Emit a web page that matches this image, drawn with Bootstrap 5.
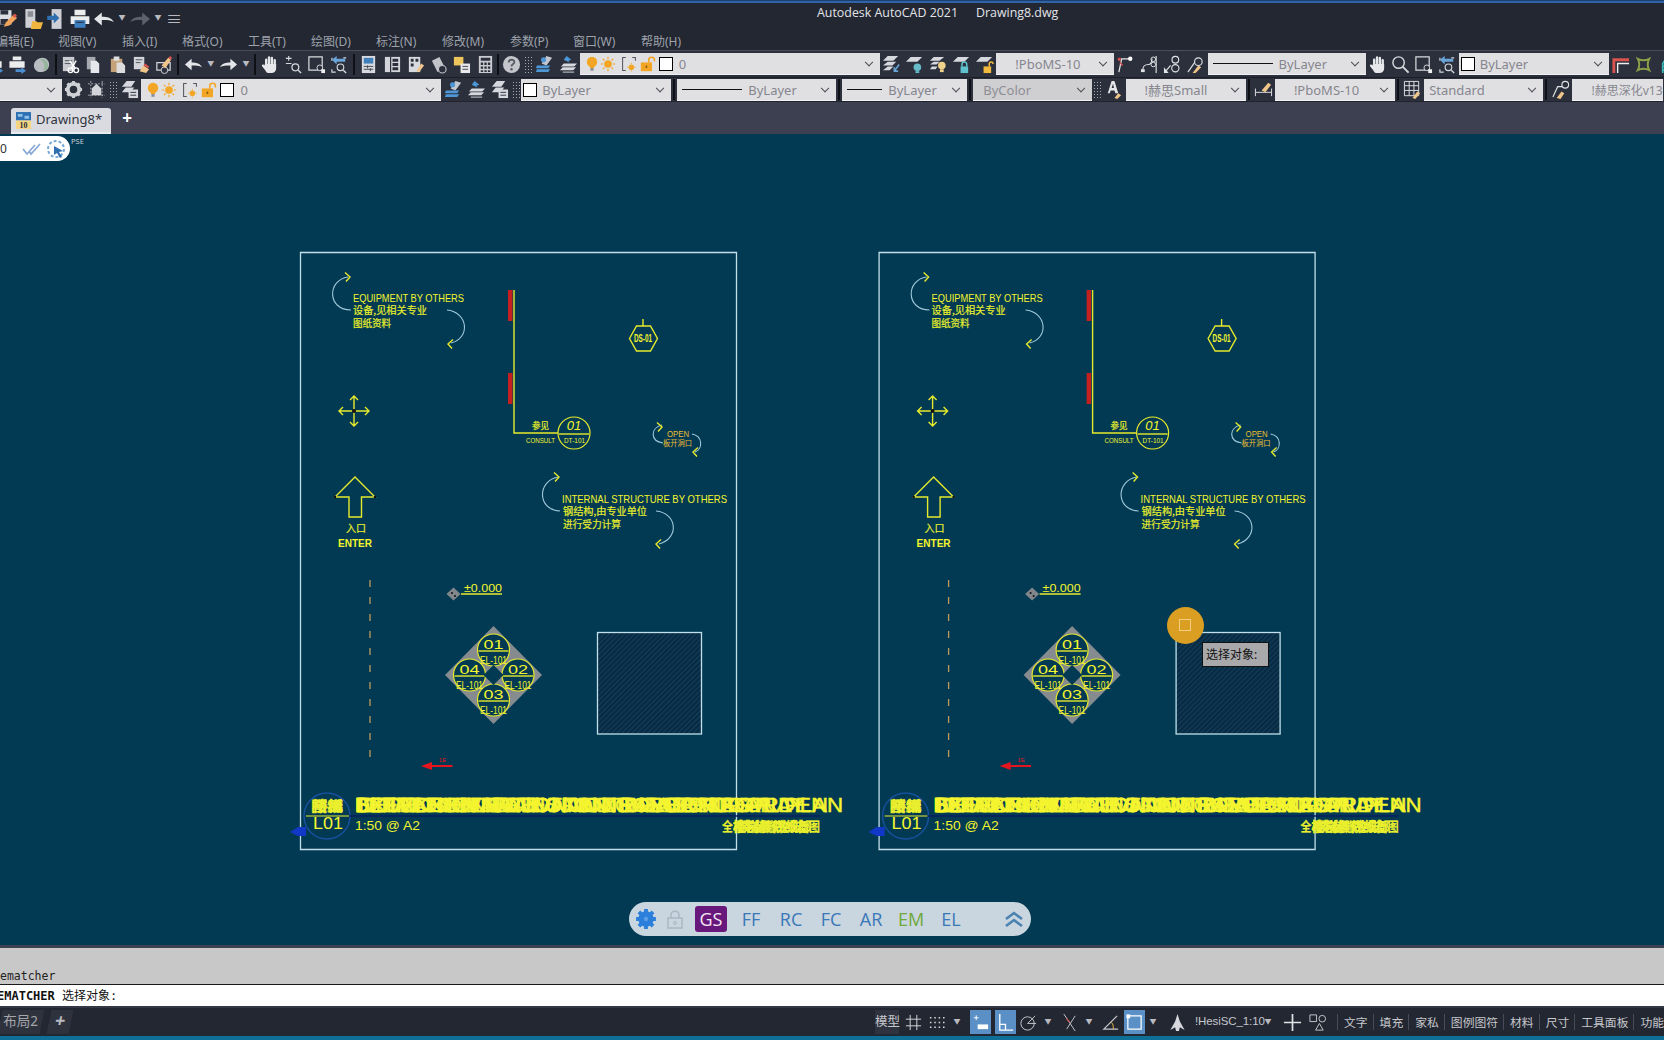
<!DOCTYPE html>
<html lang="zh-CN">
<head>
<meta charset="UTF-8">
<meta name="viewport" content="width=device-width, initial-scale=1.0">
<title>Autodesk AutoCAD 2021 - Drawing8.dwg</title>
<link href="https://cdn.jsdelivr.net/npm/bootstrap@5.3.0/dist/css/bootstrap.min.css" rel="stylesheet">
<style>
body { background:#23272f; overflow:hidden; font-family:"Noto Sans","Noto Sans CJK SC",sans-serif; font-size:12px; }
.app { height:1040px; width:1664px; overflow:hidden; }
.topline { height:3px; background:#2f64a8; border-top:1px solid #1c3f70; }
.quickrow { height:31px; background:#232732; }
.titletext { left:817px; top:5px; color:#e2e4e8; font-size:12.4px; line-height:20px; white-space:nowrap; font-family:"Open Sans",sans-serif; }
.titletext span { margin-left:18px; }
.menurow { height:16px; background:#232732; color:#9ea2ab; font-size:12px; line-height:16px; white-space:nowrap; }
.menurow span { flex:none; }
.menurow .m1 { margin-left:-4px; width:62px; } .menurow .m2 { width:64px; } .menurow .m3 { width:60px; } .menurow .m4 { width:66px; }
.menurow .m5 { width:63px; } .menurow .m6 { width:65px; } .menurow .m7 { width:66px; } .menurow .m8 { width:68px; }
.menurow .m9 { width:63px; } .menurow .m10 { width:68px; } .menurow .m11 { width:60px; }
.barA { height:28px; background:#2c303c; border-top:1px solid #4a4e5a; border-bottom:1px solid #1b1e26; }
.barB { height:24px; background:#2c303c; border-bottom:1px solid #20232c; }
.barB .dd { padding-top:3px; }
.tabrow { height:32px; background:#3c4051; }
.ti { width:23.3px; height:22px; flex:none; display:flex; align-items:center; justify-content:center; }
.ti svg { width:19px; height:19px; }
.tcut { margin-left:-17px; }
.tq { width:24px; }
.tq svg { width:22px; height:22px; }
.tq-first { margin-left:-6px; }
.tq-open { margin-left:2px; }
.tc { width:12px; flex:none; text-align:center; color:#b8bac0; font-size:7px; }
.tc-cust { margin-left:2px; }
.ts { width:6px; flex:none; height:21px; }
.ts::after { content:""; display:block; width:2px; height:21px; margin:0 auto; background:#0e1016; }
.ts-n { width:3px; }
.tg { width:8px; flex:none; height:17px; margin:0 1px; background-image:radial-gradient(#a6a8b0 35%,transparent 40%); background-size:3px 3px; }
.dd { height:22px; flex:none; background:#e0e0e3; color:#86868e; display:flex; align-items:center; font-size:13px; white-space:nowrap; overflow:hidden; padding:2px 6px 0 5px; border-bottom:1px solid #f2f2f4; }
.dd svg { width:16px; height:16px; flex:none; margin-top:-2px; }
.dd-lay { padding-left:4px; }
.dd-col { padding-left:2px; }
.dd-mid { padding-left:19px; }
.dd-color { padding-left:10px; }
.dd-dim { background:#cfcfd2; color:#8e8e95; }
.dd-end { font-size:12px; padding-right:0; }
.lay-c { margin-left:5px; }
.lay-d { margin-left:3px; }
.w300 { width:300px; } .w150 { width:150px; } .w158 { width:158px; } .w159 { width:159px; } .w125 { width:125px; }
.w119 { width:119px; } .w120 { width:120px; } .w118 { width:118px; } .w61 { width:61.5px; } .w91 { width:91px; }
.chev { flex:none; width:6px; height:6px; border-right:1.4px solid #4c4c52; border-bottom:1.4px solid #4c4c52; transform:rotate(45deg) translate(-2px,-2px); margin-left:auto; margin-right:2px; }
.swatch { width:14px; height:14px; flex:none; background:#fff; border:1.4px solid #000; margin-top:-2px; margin-right:5px; }
.lay-sw { margin-left:3px; margin-right:6px; }
.lnA { width:60px; height:1.5px; background:#111; flex:none; margin-right:6px; margin-top:-2px; }
.lnB { width:35px; height:1.5px; background:#111; flex:none; margin-right:6px; margin-top:-2px; }
.tabon { width:100px; height:26px; margin-left:11px; background:#d9dbe1; color:#30333c; border-radius:3px 3px 0 0; font-size:13px; padding-left:5px; border-bottom:2px solid #e9ebef; }
.tabon svg { width:15px; height:17px; margin-right:5px; }
.tabadd { width:24px; margin-left:4px; text-align:center; color:#fff; font-size:17px; font-weight:700; line-height:22px; }
.cadview { background:#023a53; overflow:hidden; }
.cadview > svg { display:block; width:1664px; height:811px; }
.ucs { left:0; top:2px; width:70px; height:25px; background:#fff; border-radius:0 14px 14px 0; color:#333; font-size:12px; }
.ucs0 { width:18px; }
.ucs-a, .ucs-b { width:20px; height:20px; margin-left:4px; }
.psetag { left:71px; top:3px; color:#c9ced6; font-size:7.5px; line-height:9px; }
.pickdot { left:1166.5px; top:473px; width:37px; height:37px; border-radius:50%; background:#d99e22; }
.pickbox { left:12px; top:12px; width:12px; height:12px; border:1.2px solid #f2cf7e; }
.prompt { left:1202px; top:508px; width:67px; height:25px; background:#a9a9ac; border:1px solid #111; color:#111; font-size:12px; line-height:23px; padding-left:3px; white-space:nowrap; }
.floatbar { left:629px; top:768px; width:402px; height:34px; background:#c9d5df; color:#3878b8; font-size:18px; line-height:26px; font-family:"Open Sans","Noto Sans",sans-serif; }
.floatbar svg { flex:none; }
.fb-gear { margin-left:6px; }
.fb-lock { margin-left:8px; }
.fb-gs { width:32px; height:26px; flex:none; background:#68177a; color:#f2e6f4; border-radius:3px; text-align:center; margin-left:10px; }
.fb-t { width:40px; flex:none; text-align:center; }
.fb-first { margin-left:4px; }
.fb-em { color:#6fa93a; }
.fb-up { margin-left:33px; }
.cmdedge { height:3px; background:#3c4051; }
.cmdlog { height:37px; background:#c8c8c8; color:#222; font-family:"DejaVu Sans Mono","Noto Sans CJK SC",monospace; font-size:11.5px; line-height:13px; padding:22px 0 0 0; border-bottom:1px solid #1a1a1a; }
.cmdline { height:21px; background:#fff; color:#111; font-family:"DejaVu Sans Mono","Noto Sans CJK SC",monospace; font-size:12px; line-height:22px; white-space:nowrap; }
.cmdline b { margin-left:-3px; }
.statusrow { height:30px; background:#232732; border-top:2px solid #343845; color:#c6c8cc; font-size:12.5px; white-space:nowrap; }
.sb-left { width:875px; flex:none; color:#a4a6ac; }
.sb-tab { width:42px; height:24px; padding-left:3px; line-height:22px; background:#2e323d; font-size:13.5px; transform:skewX(-12deg); }
.sb-tab span { display:inline-block; transform:skewX(12deg); }
.sb-add { width:22px; height:24px; margin-left:7px; background:#2e323d; text-align:center; font-size:18px; line-height:21px; transform:skewX(-12deg); color:#b8bac0; font-weight:700; }
.sb-i { width:24px; height:24px; flex:none; display:flex; align-items:center; justify-content:center; }
.sb-i svg { width:19px; height:19px; }
.sb-on { width:21px; background:#5b90c6; }
.sb-model { width:24px; flex:none; background:#2f333f; line-height:24px; text-align:center; }
.sb-c { width:16px; flex:none; text-align:center; font-size:7px; color:#b8bac0; }
.sb-grid { margin-left:2px; }
.sb-first-on { margin-left:5px; }
.sb-next-on { margin-left:4px; }
.sb-m1 { margin-left:1px; }
.sb-m2 { margin-left:2px; }
.sb-m4 { margin-left:4px; }
.sb-sc { width:65px; flex:none; margin-left:6px; font-family:"Liberation Sans",sans-serif; font-size:11.5px; letter-spacing:-.1px; }
.sb-l { flex:none; border-left:1px solid #474b57; padding:0 6px; line-height:16px; margin-left:-1px; font-size:11.8px; }
.sb-l-first { margin-left:8px; }
.botline { height:4px; background:#0f6f96; }
.t-en { font-family:"Liberation Sans",sans-serif; fill:#f4f52e; }
.t-cn { font-family:"Noto Sans CJK SC",sans-serif; fill:#e9ef2c; stroke:#e9ef2c; stroke-width:.2; }
.t-or { fill:#eebe32; }
.ln-y { stroke:#e6ea2c; fill:none; stroke-width:1.4; }
.ln-b { stroke:#9fc8da; fill:none; stroke-width:1.1; }
</style>
</head>
<body>
<svg width="0" height="0" class="position-absolute">
<defs>
<symbol id="savepen" viewBox="0 0 20 20"><path fill="#dcdde2" d="M2 2h13v13H2z"/><path fill="#2c303c" d="M5 2h7v4H5zM5 10h7v5H5z"/><path fill="#f0a45c" d="M8 17l2-4 7-7 3 3-7 7z"/><path fill="#d9534f" d="M16 7l2-2 2 2-2 2z"/></symbol>
<symbol id="openf" viewBox="0 0 20 20"><path fill="#cfd0d6" d="M4 1h9v17H4z"/><path fill="#8a8d96" d="M6 3h5v5H6z"/><path fill="#f1b63f" d="M10 12h4l1 1h5l-2 6H9z"/></symbol>
<symbol id="importf" viewBox="0 0 20 20"><path fill="#cfd0d6" d="M6 1h9v18H6z"/><path fill="#2f6fb0" d="M2 7h6V4l5 5-5 5v-3H2z"/></symbol>
<symbol id="print" viewBox="0 0 20 20"><path fill="#eceded" d="M5 1.500h10v5H5zM1.500 7.500h17v7h-17z"/><path fill="#3c7fbe" d="M5 11h10v7H5z"/><path fill="#2c303c" d="M6.500 12.500h7v1h-7z"/></symbol>
<symbol id="plot" viewBox="0 0 20 20"><path fill="#eceded" d="M5 1.500h9v4H5zM1.500 6.500h16v7h-16z"/><path fill="#4b8fd0" d="M8 15h6v-2l5 3.500-5 3.500v-2H8z"/></symbol>
<symbol id="cloudy" viewBox="0 0 20 20"><path fill="#b9bcc0" d="M2 11c0-4 4-8 9-8 4 0 7 3 7 7 0 5-4 8-9 8-4 0-7-3-7-7z"/><path fill="#95b69a" d="M8 4c5-1 9 3 9 7 0 3-2 5-5 5 2-4 1-9-4-12z"/></symbol>
<symbol id="cutp" viewBox="0 0 20 20"><path fill="#c9cbd0" d="M2 2h12v15H2z"/><path stroke="#50535c" fill="none" d="M4 6h8M4 9h8"/><circle cx="10" cy="16" r="2.500" fill="none" stroke="#fff" stroke-width="1.400"/><circle cx="16" cy="16" r="2.500" fill="none" stroke="#fff" stroke-width="1.400"/><path stroke="#fff" stroke-width="1.500" d="M11 14l5-8M15 14L9 6"/></symbol>
<symbol id="copyp" viewBox="0 0 20 20"><path fill="#a7a9b0" d="M3 2h9v13H3z"/><path fill="#e6e7ea" d="M7 6h6l3 3v10H7z"/></symbol>
<symbol id="paste" viewBox="0 0 20 20"><path fill="#c5a27a" d="M3 4h12v14H3z"/><path fill="#ddd" d="M6 1.500h6V6H6zM9 8h6l3 3v8H9z"/></symbol>
<symbol id="matchp" viewBox="0 0 20 20"><path fill="#d4d5da" d="M3 2h11v13H3z"/><path stroke="#50535c" fill="none" d="M5 5h7M5 8h5"/><path fill="#f0c58a" d="M9 17l4-6 6 4-3 4z"/><path fill="#d9534f" d="M13 11l2-2 4 3-1 2z"/></symbol>
<symbol id="matchb" viewBox="0 0 20 20"><path fill="none" stroke="#d4d5da" stroke-width="1.300" d="M3 8h14v8H3z"/><circle cx="11" cy="16" r="3.500" fill="#2c303c" stroke="#d4d5da"/><path fill="#f0c58a" d="M8 11l7-8 3 2-6 9z"/><path fill="#d9534f" d="M15 3l2-2 2 2-1 2z"/></symbol>
<symbol id="undoa" viewBox="0 0 20 20"><path fill="#e4e5e9" d="M1 10l7-6v4c5 0 9 1 11 5-3-2-6-2-11-2v5z"/></symbol>
<symbol id="redoa" viewBox="0 0 20 20"><path fill="#e4e5e9" d="M19 10l-7-6v4C7 8 3 9 1 13c3-2 6-2 11-2v5z"/></symbol>
<symbol id="redog" viewBox="0 0 20 20"><path fill="#5d616c" d="M19 10l-7-6v4C7 8 3 9 1 13c3-2 6-2 11-2v5z"/></symbol>
<symbol id="hand" viewBox="0 0 20 20"><g stroke="#e6e7ea" stroke-width="2.500" stroke-linecap="round"><path d="M6.500 10V5M9.500 9V2.500M12.500 9V3M15.500 10V5.500"/></g><path fill="#e6e7ea" d="M5 9.500h12v4.500c0 3-2 5-5 5H9.500c-2 0-3-1-4-3L2 11.500c0-1.500 1.500-2 3-.5z"/></symbol>
<symbol id="zoomrt" viewBox="0 0 20 20"><path stroke="#d8dade" stroke-width="1.200" fill="none" d="M3 3.500h6M6 1v5M3 9h6"/><circle cx="13" cy="13" r="3.600" fill="none" stroke="#d8dade" stroke-width="1.300"/><path stroke="#d8dade" stroke-width="1.500" d="M16 16l3 3"/></symbol>
<symbol id="zoomwin" viewBox="0 0 20 20"><path fill="none" stroke="#d8dade" stroke-width="1.300" d="M2 2h14v14H2z"/><circle cx="13.500" cy="13.500" r="3" fill="#2c303c" stroke="#d8dade"/><path fill="#eee" d="M15 15l4 0 0 4-4 0z"/></symbol>
<symbol id="zoomprev" viewBox="0 0 20 20"><path fill="none" stroke="#d8dade" stroke-width="1.200" d="M2 6V3M2 15v3h4M14 3h3"/><path fill="#6aa5da" d="M2 5l5-4v3h9v3H7v3z"/><circle cx="11" cy="13" r="3.500" fill="none" stroke="#d8dade" stroke-width="1.200"/><path stroke="#d8dade" stroke-width="1.500" d="M14 16l3 3"/></symbol>
<symbol id="props" viewBox="0 0 20 20"><path fill="#d8dae0" d="M3 1h14v18H3z"/><path fill="#3f80bb" d="M5 3h10v6H5z"/><path stroke="#40444f" d="M5 12h10M5 15h10M9 11v3M12 14v3"/></symbol>
<symbol id="design" viewBox="0 0 20 20"><path fill="#d4d5da" d="M2 2h16v16H2z"/><path stroke="#2c303c" stroke-width="1.300" d="M8 2v16"/><path fill="#2c303c" d="M10 4h6v3h-6zM10 8.500h6v3h-6zM10 13h6v3h-6z"/></symbol>
<symbol id="sheets" viewBox="0 0 20 20"><path fill="#d8dae0" d="M3 2h12v16H3z"/><path fill="#2c303c" d="M5 4h3v3H5zM10 4h3v3h-3zM5 9h3v3H5z"/><path fill="#f0c58a" d="M11 17l5-8 3 2-5 7z"/></symbol>
<symbol id="toolp" viewBox="0 0 20 20"><path fill="#c2c4ca" d="M3 6l8-4 6 12-8 4z"/><circle cx="14" cy="15" r="4" fill="#2c303c" stroke="#c2c4ca" stroke-width="1.200"/></symbol>
<symbol id="markup" viewBox="0 0 20 20"><path fill="#eec55d" d="M2 2h10v9H2z"/><path fill="#e8e8ea" d="M9 9h10v10H9z"/><path stroke="#40444f" d="M11 12h6M11 15h6"/></symbol>
<symbol id="calc" viewBox="0 0 20 20"><path fill="#c9cbd0" d="M3 1h14v18H3z"/><path fill="#2c303c" d="M5 3h10v3H5zM5 8h2.500v2.500H5zM8.800 8h2.500v2.500H8.800zM12.500 8H15v2.500h-2.500zM5 12h2.500v2.500H5zM8.800 12h2.500v2.500H8.800zM12.500 12H15v2.500h-2.500zM5 16h2.500v2H5zM8.800 16h2.500v2H8.800zM12.500 16H15v2h-2.500z"/></symbol>
<symbol id="helpc" viewBox="0 0 20 20"><circle cx="10" cy="10" r="9" fill="#c5c6cb"/><path fill="none" stroke="#5a5c64" stroke-width="2" d="M7 8c0-4 6-4 6-.5 0 2-3 2-3 4.500"/><circle cx="10" cy="15" r="1.300" fill="#5a5c64"/></symbol>
<symbol id="layers" viewBox="0 0 20 20"><path fill="#d6d8de" d="M7 9l5-8 6 2-6 8z" opacity=".9"/><circle cx="9" cy="5" r="2.700" fill="#4d97d8"/><path fill="#4d97d8" d="M2 11h14l-2 3H1zM2 15h14l-2 3H1z"/></symbol>
<symbol id="layerp" viewBox="0 0 20 20"><path fill="#4d97d8" d="M8 1l5 4-3 1 1 2-6-3z"/><path fill="#d6d8de" d="M5 9h14l-3 3H2zM4 13h14l-3 3H1z"/><path stroke="#d6d8de" d="M4 18h12"/></symbol>
<symbol id="layers2" viewBox="0 0 20 20"><path fill="#d6d8de" d="M7 1h9l-4 6H2zM6 8h9l-4 5H2z"/><path fill="#d6d8de" d="M9 10h10v9H9z"/><path stroke="#2c303c" d="M11 13h6M11 16h6"/></symbol>
<symbol id="laymk" viewBox="0 0 20 20"><path fill="#d6d8de" d="M6 1h11l-5 5H1zM6 7h9l-4 4H1zM6 12h6l-4 4H1z"/><path stroke="#6aa5da" stroke-width="1.700" d="M18 10l-5 7M13 13v4h4"/></symbol>
<symbol id="layoff" viewBox="0 0 20 20"><path fill="#d6d8de" d="M6 2h12l-5 5H1z"/><circle cx="13" cy="13" r="4" fill="#66bcc9"/><path fill="#66bcc9" d="M11 17h4v2h-4z"/></symbol>
<symbol id="layiso" viewBox="0 0 20 20"><path fill="#d6d8de" d="M5 2h11l-5 4H1zM5 7h6l-3 3H1zM3 12h6l-2 3H1z"/><circle cx="13.500" cy="11" r="4" fill="#f0d28b"/><path fill="#f0d28b" d="M11.500 15h4v3h-4z"/></symbol>
<symbol id="laylk" viewBox="0 0 20 20"><path fill="#d6d8de" d="M6 2h12l-5 5H1z"/><path fill="#5fc0ce" d="M9 12h8v7H9z"/><path fill="none" stroke="#5fc0ce" stroke-width="1.600" d="M10.500 12V9.500c0-3 5-3 5 0V12"/></symbol>
<symbol id="layul" viewBox="0 0 20 20"><path fill="#d6d8de" d="M6 2h12l-5 5H1z"/><path fill="#f2bb3d" d="M9 12h8v7H9z"/><path fill="none" stroke="#f2bb3d" stroke-width="1.600" d="M15 12V9.500c0-3 4-3 4 0"/></symbol>
<symbol id="gear" viewBox="0 0 20 20"><circle cx="10" cy="10" r="6" fill="none" stroke="#cfd1d6" stroke-width="4"/><path stroke="#cfd1d6" stroke-width="3" d="M10 1v3M10 16v3M1 10h3M16 10h3M3.600 3.600l2 2M14.400 14.400l2 2M3.600 16.400l2-2M14.400 5.600l2-2"/></symbol>
<symbol id="wsmask" viewBox="0 0 20 20"><path fill="none" stroke="#a8aab0" stroke-dasharray="2 1.500" d="M1 4h18M1 16h18M4 1v18M16 1v18"/><path fill="#d4d5da" d="M10 4l5 5v7H5V9z"/></symbol>
<symbol id="bulb" viewBox="0 0 20 20"><circle cx="10" cy="7.500" r="6.500" fill="#f3a626"/><path fill="#f3a626" d="M7.500 13h5v2h-5z"/><path fill="#8f8f94" d="M8 15h4v3.500H8z"/></symbol>
<symbol id="sun" viewBox="0 0 20 20"><circle cx="10" cy="10" r="4.800" fill="#f3a626"/><path stroke="#f3a626" stroke-width="1.500" d="M10 1v3M10 16v3M1 10h3M16 10h3M3.600 3.600l2 2M14.400 14.400l2 2M3.600 16.400l2-2M14.400 5.600l2-2"/></symbol>
<symbol id="vpf" viewBox="0 0 20 20"><path fill="none" stroke="#55575f" stroke-width="1.300" d="M6 2H2v16h4M14 2h4v4"/><circle cx="13" cy="14" r="3.500" fill="#f3a626"/><path stroke="#f3a626" d="M13 8.500V10M13 18v1.500M7.500 14H9M17 14h1.500"/></symbol>
<symbol id="lockop" viewBox="0 0 20 20"><path fill="#f3a626" d="M1 8h14v11H1z"/><path fill="none" stroke="#f3a626" stroke-width="2" d="M11 8V4.500c0-4 7-4 7 0V7"/><path fill="#8f5c0c" d="M7 12h2v3H7z"/></symbol>
<symbol id="polar1" viewBox="0 0 20 20"><path stroke="#e6e7ea" stroke-width="1.300" fill="none" d="M3 18L6 4h8"/><circle cx="15" cy="4" r="2.300" fill="#fff"/><path stroke="#d9534f" stroke-width="1.500" d="M4 8l3 3"/><path fill="#d9534f" d="M2 3h3v3H2z"/></symbol>
<symbol id="polar2" viewBox="0 0 20 20"><path stroke="#e0e2e6" fill="none" stroke-width="1.200" d="M3 16c0-5 2-6 6-6s3-6 4-6M17 1v18"/><circle cx="14" cy="4.500" r="2.400" fill="none" stroke="#e0e2e6"/><circle cx="14" cy="10" r="2.400" fill="none" stroke="#e0e2e6"/><path fill="#e0e2e6" d="M1 15h4v3H1z"/></symbol>
<symbol id="polar3" viewBox="0 0 20 20"><path stroke="#e0e2e6" fill="none" stroke-width="1.200" d="M2 18L8 11"/><circle cx="13" cy="5" r="3.500" fill="none" stroke="#e0e2e6" stroke-width="1.200"/><circle cx="13" cy="14" r="3.800" fill="none" stroke="#e0e2e6" stroke-width="1.200"/><path fill="#e0e2e6" d="M1 13v6h5z"/></symbol>
<symbol id="polar4" viewBox="0 0 20 20"><path stroke="#e0e2e6" fill="none" stroke-width="1.200" d="M2 18l7-10"/><circle cx="13" cy="7" r="4" fill="none" stroke="#e0e2e6" stroke-width="1.200"/><path fill="#f0c58a" d="M7 19l6-8 3 2-6 6z"/></symbol>
<symbol id="mag" viewBox="0 0 20 20"><circle cx="8" cy="8" r="6" fill="none" stroke="#d8dade" stroke-width="1.500"/><path stroke="#d8dade" stroke-width="2" d="M12.500 12.500l6 6"/></symbol>
<symbol id="corner" viewBox="0 0 20 20"><path fill="none" stroke="#d9534f" stroke-width="3" d="M3 19V5h16"/><path fill="none" stroke="#eee" stroke-width="1.500" d="M7 19V9h12"/></symbol>
<symbol id="greenb" viewBox="0 0 20 20"><path fill="none" stroke="#8da248" stroke-width="2" d="M4 4c4 2 8 2 12 0-2 4-2 8 0 12-4-2-8-2-12 0 2-4 2-8 0-12z"/></symbol>
<symbol id="cyanh" viewBox="0 0 20 20"><path fill="none" stroke="#3bb7b7" stroke-width="1.800" d="M6 19V9l4-6 4 6v10M6 12h8M6 16h8"/></symbol>
<symbol id="texta" viewBox="0 0 20 20"><path fill="#e6e7ea" d="M4 14L8 1h3l4 13h-3l-1-3H7l-1 3zM8 8.500h2.500L9.500 4z"/><path fill="#f0c58a" d="M11 19l4-5 3 2-4 4z"/></symbol>
<symbol id="dimst" viewBox="0 0 20 20"><path stroke="#e0e2e6" fill="none" d="M1.500 9v8M18.500 9v8M2 13h16"/><path fill="#f0c58a" d="M8 11l7-8 3 2-6 8z"/></symbol>
<symbol id="tablest" viewBox="0 0 20 20"><path stroke="#e0e2e6" fill="none" d="M1.500 1.500h15v15h-15zM1.500 6h15M1.500 11h15M6.500 1.500v15M11.500 1.500v15"/><path fill="#f0c58a" d="M10 19l5-7 3 2-5 6z"/></symbol>
<symbol id="mulst" viewBox="0 0 20 20"><path stroke="#e0e2e6" fill="none" stroke-width="1.200" d="M2 18l5-11h5"/><circle cx="15" cy="5" r="3.500" fill="none" stroke="#e0e2e6" stroke-width="1.200"/><path fill="#f0c58a" d="M6 19l5-7 3 2-4 6z"/></symbol>
<symbol id="dwgfile" viewBox="0 0 16 18"><path fill="#2c6fb3" d="M0 0h16v9H0z"/><path fill="#8fc0e6" d="M2 2h5v3H2zM9 4h5v3H9z"/><path fill="#f6d480" d="M0 9h16v9H0z"/><text x="8" y="17" font-size="8.500" font-weight="700" text-anchor="middle" fill="#1f2b3d" font-family="Liberation Serif,serif">10</text></symbol>
<symbol id="chkmk" viewBox="0 0 20 20"><path fill="none" stroke="#86a8d4" stroke-width="1.700" d="M1 10l4 5 8-9M7 12l2 3 9-10"/></symbol>
<symbol id="pickst" viewBox="0 0 20 20"><circle cx="10" cy="10" r="8" fill="none" stroke="#75a8d6" stroke-width="2" stroke-dasharray="3 2"/><path fill="#2f6fb0" d="M8 7l9 5-4 1 3 5-2 1-3-5-3 2z"/></symbol>
<symbol id="gridst" viewBox="0 0 20 20"><path stroke="#d8dade" d="M2 6.500h16M2 13.500h16M6.500 2v16M13.500 2v16"/></symbol>
<symbol id="snapst" viewBox="0 0 20 20"><path stroke="#d8dade" stroke-width="1.600" stroke-dasharray="1.600 3" d="M2 5h16M2 10h16M2 15h16"/></symbol>
<symbol id="inferst" viewBox="0 0 20 20"><path stroke="#fff" d="M3 5h5M5.500 2.500v5"/><path fill="#fff" d="M7 12h11v5H7z"/></symbol>
<symbol id="orthost" viewBox="0 0 20 20"><path fill="none" stroke="#fff" stroke-width="1.400" d="M4 1v17h14M4 12h6v6"/></symbol>
<symbol id="polarst" viewBox="0 0 20 20"><circle cx="9" cy="11" r="7" fill="none" stroke="#c6c8cc"/><path stroke="#c6c8cc" d="M9 11l8-8M9 11h9"/></symbol>
<symbol id="osnapst" viewBox="0 0 20 20"><path stroke="#c6c8cc" d="M4 1l12 18"/><path stroke="#d9534f" stroke-width="1.300" d="M10 10l-3-4"/><path stroke="#c6c8cc" d="M16 3L7 17"/></symbol>
<symbol id="anglest" viewBox="0 0 20 20"><path fill="none" stroke="#c6c8cc" stroke-width="1.300" d="M17 3L3 17h15"/><path fill="none" stroke="#f0c040" d="M11 10c2 2 2 4 2 7"/></symbol>
<symbol id="boxst" viewBox="0 0 20 20"><path fill="none" stroke="#fff" stroke-width="1.300" d="M3 3h14v14H3z"/><path fill="#fff" d="M1.500 1.500h4v4h-4z"/></symbol>
<symbol id="annoman" viewBox="0 0 20 20"><path fill="#d7d9de" d="M10 1l2.500 8 5 9-5-3-1 4h-3l-1-4-5 3 5-9z"/></symbol>
<symbol id="shapes" viewBox="0 0 20 20"><path fill="none" stroke="#c6c8cc" d="M2 2h7v7H2zM8 18l4-7 4 7z"/><circle cx="15" cy="6" r="3.500" fill="none" stroke="#c6c8cc"/></symbol>
<pattern id="hatch" width="3.600" height="3.600" patternUnits="userSpaceOnUse" patternTransform="rotate(45)"><rect width="3.600" height="3.600" fill="#082a42"/><rect width="1.100" height="3.600" fill="#123f5b"/></pattern>
<g id="chevR"><path class="ln-y" stroke-width="1.500" d="M-4-4.500 1 0-3 4.500"/></g>
<g id="chevL"><path class="ln-y" stroke-width="1.500" d="M4-4.500-1 0 3 4.500"/></g>
<g id="tagC"><circle r="16" fill="#023a53" stroke="#e6ea2c" stroke-width="1.200"/><path class="ln-y" d="M-15 1h30"/></g>
<g id="sheet">
  <path fill="none" stroke="#c2deea" stroke-width="1.300" d="M300.500 252.500h436v597h-436z"/>
  <path class="ln-b" d="M348 277C327 280 327 310 351 310"/><use href="#chevR" x="349" y="277"/>
  <text class="t-en" x="353" y="302" font-size="11" textLength="111" lengthAdjust="spacingAndGlyphs">EQUIPMENT BY OTHERS</text>
  <text class="t-cn" x="353" y="313.500" font-size="10" textLength="74" lengthAdjust="spacingAndGlyphs">设备,见相关专业</text>
  <text class="t-cn" x="353" y="326.500" font-size="10" textLength="38" lengthAdjust="spacingAndGlyphs">图纸资料</text>
  <path class="ln-b" d="M447 310C468 312 471 338 451 343"/><use href="#chevL" x="449" y="344"/>
  <path fill="#c4201f" d="M508 290h4.500v31H508zM508 373h4.500v31H508z"/>
  <path class="ln-y" d="M514 290V433h46"/>
  <text class="t-cn" x="532" y="429" font-size="9" textLength="17" lengthAdjust="spacingAndGlyphs">参见</text>
  <text class="t-en" x="526" y="443" font-size="8" textLength="29" lengthAdjust="spacingAndGlyphs">CONSULT</text>
  <use href="#tagC" x="574" y="433"/>
  <text class="t-en" x="574" y="430" font-size="13" font-style="italic" text-anchor="middle">01</text>
  <text class="t-en" x="564" y="443" font-size="8" textLength="21" lengthAdjust="spacingAndGlyphs">DT-101</text>
  <path class="ln-y" d="M643 319v7M629.500 338.500 636.500 326h14l7 12.500-7 12.500h-14z"/>
  <text class="t-en" x="634" y="342" font-size="10" font-weight="700" textLength="18" lengthAdjust="spacingAndGlyphs">DS-01</text>
  <path class="ln-y" stroke-width="1.300" d="M354 396v30M339 411h30M350 400l4-4 4 4M350 422l4 4 4-4M343 407l-4 4 4 4M365 407l4 4-4 4"/>
  <circle cx="354" cy="411" r="2" fill="#111"/>
  <path class="ln-y" stroke-width="1.500" d="M355 477 335 497h14v20h12.500V497H375z"/>
  <circle cx="335" cy="497" r="1.300" fill="#111"/><circle cx="375" cy="497" r="1.300" fill="#111"/>
  <text class="t-cn" x="346" y="532" font-size="10.500" textLength="20" lengthAdjust="spacingAndGlyphs">入口</text>
  <text class="t-en" x="338" y="547" font-size="10" font-weight="700" textLength="34" lengthAdjust="spacingAndGlyphs">ENTER</text>
  <text class="t-or" x="667" y="437" font-size="8.500" font-family="Liberation Sans,sans-serif" textLength="22" lengthAdjust="spacingAndGlyphs">OPEN</text>
  <text class="t-or" x="663" y="445.500" font-size="7.500" font-family="Noto Sans CJK SC,sans-serif" textLength="29" lengthAdjust="spacingAndGlyphs">板开洞口</text>
  <path class="ln-b" d="M662 425C650 428 650 441 663 443M692 434C703 436 703 449 695 452"/><use href="#chevR" x="661" y="427"/><use href="#chevL" x="694" y="452"/>
  <path class="ln-b" d="M558 477C537 481 537 510 560 511"/><use href="#chevR" x="558" y="477"/>
  <text class="t-en" x="562" y="503" font-size="11.500" textLength="165" lengthAdjust="spacingAndGlyphs">INTERNAL STRUCTURE BY OTHERS</text>
  <text class="t-cn" x="563" y="514.500" font-size="10" textLength="84" lengthAdjust="spacingAndGlyphs">钢结构,由专业单位</text>
  <text class="t-cn" x="563" y="527.500" font-size="10" textLength="58" lengthAdjust="spacingAndGlyphs">进行受力计算</text>
  <path class="ln-b" d="M656 511C677 513 680 538 659 544"/><use href="#chevL" x="657" y="544"/>
  <path fill="none" stroke="#bd9a5c" stroke-width="1.300" stroke-dasharray="7 10" d="M370 580V767"/>
  <path fill="#80868a" d="M453.500 587.500l7 6.500-7 6.500-7-6.500z"/><circle cx="452" cy="593" r="1" fill="#111"/><circle cx="455" cy="596" r="1" fill="#111"/>
  <path class="ln-y" d="M461 594h41"/>
  <text class="t-en" x="464" y="592" font-size="11" textLength="38" lengthAdjust="spacingAndGlyphs">±0.000</text>
  <path fill="#858b8e" d="M493.500 626 542 675 493.500 724 445 675z"/>
  <use href="#tagC" x="493.500" y="650"/><use href="#tagC" x="518" y="675"/><use href="#tagC" x="493.500" y="700"/><use href="#tagC" x="469.500" y="675"/>
  <path fill="#023a53" d="M493.500 665l10 10-10 10-10-10z"/>
  <text class="t-en" x="483.500" y="649" font-size="13" textLength="20" lengthAdjust="spacingAndGlyphs">01</text><text class="t-en" x="480" y="663.500" font-size="11.500" textLength="27" lengthAdjust="spacingAndGlyphs">EL-101</text>
  <text class="t-en" x="508" y="674" font-size="13" textLength="20" lengthAdjust="spacingAndGlyphs">02</text><text class="t-en" x="504.500" y="688.500" font-size="11.500" textLength="27" lengthAdjust="spacingAndGlyphs">EL-101</text>
  <text class="t-en" x="483.500" y="699" font-size="13" textLength="20" lengthAdjust="spacingAndGlyphs">03</text><text class="t-en" x="480" y="713.500" font-size="11.500" textLength="27" lengthAdjust="spacingAndGlyphs">EL-101</text>
  <text class="t-en" x="459.500" y="674" font-size="13" textLength="20" lengthAdjust="spacingAndGlyphs">04</text><text class="t-en" x="456" y="688.500" font-size="11.500" textLength="27" lengthAdjust="spacingAndGlyphs">EL-101</text>
  <rect x="597.500" y="632.500" width="104" height="101.500" fill="url(#hatch)" stroke="#bfe0ec" stroke-width="1.300"/>
  <path stroke="#e5151f" stroke-width="2" d="M452.500 766H424"/><path fill="#e5151f" d="M421 766l11-4v8z"/>
  <text x="442.500" y="762" font-size="6" fill="#e5151f" text-anchor="middle" font-family="Liberation Sans,sans-serif">1E</text>
  <circle cx="327" cy="816" r="23" fill="none" stroke="#17509c" stroke-width="1.500"/>
  <path fill="#1238c8" d="M290 832l8-5h8v9h-8z"/>
  <path stroke="#e6ea2c" stroke-width="1.200" d="M306 816h43"/><path stroke="#0a1f60" stroke-width="1.600" d="M349 816H820"/>
  <g font-size="14" font-weight="700">
    <text class="t-cn" x="312" y="811" textLength="31" lengthAdjust="spacingAndGlyphs">楼梯</text>
    <text class="t-cn" x="313" y="811" textLength="30" lengthAdjust="spacingAndGlyphs">平面</text>
    <text class="t-cn" x="311" y="811" textLength="32" lengthAdjust="spacingAndGlyphs">图纸</text>
  </g>
  <g font-size="20" stroke="#f4f52e" stroke-width=".45">
    <text class="t-en" x="355" y="812" textLength="399" lengthAdjust="spacingAndGlyphs">DETAIL ELEVATION OF ENTRANCE STAIR</text>
    <text class="t-en" x="356" y="812" textLength="420" lengthAdjust="spacingAndGlyphs">SECTION ELEVATION ONE FLOOR PLAN</text>
    <text class="t-en" x="355" y="812" textLength="450" lengthAdjust="spacingAndGlyphs">EXTENSION ELEVATION BOARD DISPLAY</text>
    <text class="t-en" x="358" y="812" textLength="470" lengthAdjust="spacingAndGlyphs">DIFFERENTIATION ON SCREEN FOR DEN</text>
    <text class="t-en" x="356" y="812" textLength="487" lengthAdjust="spacingAndGlyphs">ELEVATION NOTES AND FOYER FLOOR PLAN</text>
    <text class="t-en" x="355" y="812" textLength="380" lengthAdjust="spacingAndGlyphs">BEHIND CONSTRUCTION ZONE MARKS</text>
  </g>
  <text class="t-en" x="313" y="829" font-size="17" textLength="30" lengthAdjust="spacingAndGlyphs">L01</text>
  <text class="t-en" x="355" y="830" font-size="13" textLength="65" lengthAdjust="spacingAndGlyphs">1:50 @ A2</text>
  <g font-size="13" font-weight="700">
    <text class="t-cn" x="722" y="831" textLength="98" lengthAdjust="spacingAndGlyphs">全楼层装修完成面图</text>
    <text class="t-cn" x="733" y="831" textLength="78" lengthAdjust="spacingAndGlyphs">楼梯展开细部</text>
    <text class="t-cn" x="735" y="831" textLength="72" lengthAdjust="spacingAndGlyphs">装修做法</text>
  </g>
</g>
</defs>
</svg>

<div class="app d-flex flex-column">
  <div class="topline"></div>

  <div class="quickrow d-flex align-items-center position-relative">
    <div class="ti tq tq-first"><svg><use href="#savepen"/></svg></div>
    <div class="ti tq tq-open"><svg><use href="#openf"/></svg></div>
    <div class="ti tq"><svg><use href="#importf"/></svg></div>
    <div class="ti tq"><svg><use href="#print"/></svg></div>
    <div class="ti tq"><svg><use href="#undoa"/></svg></div>
    <div class="tc">▼</div>
    <div class="ti tq"><svg><use href="#redog"/></svg></div>
    <div class="tc">▼</div>
    <div class="tc tc-cust fs-6 lh-1">≡</div>
    <div class="position-absolute top-0 titletext">Autodesk AutoCAD 2021<span>Drawing8.dwg</span></div>
  </div>

  <div class="menurow d-flex">
    <span class="m1">编辑(E)</span><span class="m2">视图(V)</span><span class="m3">插入(I)</span><span class="m4">格式(O)</span><span class="m5">工具(T)</span><span class="m6">绘图(D)</span><span class="m7">标注(N)</span><span class="m8">修改(M)</span><span class="m9">参数(P)</span><span class="m10">窗口(W)</span><span class="m11">帮助(H)</span>
  </div>

  <div class="barA d-flex align-items-center overflow-hidden">
    <div class="ti tcut"><svg><use href="#plot"/></svg></div>
    <div class="ti"><svg><use href="#plot"/></svg></div>
    <div class="ti"><svg><use href="#cloudy"/></svg></div>
    <div class="ts"></div>
    <div class="ti"><svg><use href="#cutp"/></svg></div>
    <div class="ti"><svg><use href="#copyp"/></svg></div>
    <div class="ti"><svg><use href="#paste"/></svg></div>
    <div class="ti"><svg><use href="#matchp"/></svg></div>
    <div class="ti"><svg><use href="#matchb"/></svg></div>
    <div class="ts"></div>
    <div class="ti"><svg><use href="#undoa"/></svg></div>
    <div class="tc">▼</div>
    <div class="ti"><svg><use href="#redoa"/></svg></div>
    <div class="tc">▼</div>
    <div class="ts"></div>
    <div class="ti"><svg><use href="#hand"/></svg></div>
    <div class="ti"><svg><use href="#zoomrt"/></svg></div>
    <div class="ti"><svg><use href="#zoomwin"/></svg></div>
    <div class="ti"><svg><use href="#zoomprev"/></svg></div>
    <div class="ts"></div>
    <div class="ti"><svg><use href="#props"/></svg></div>
    <div class="ti"><svg><use href="#design"/></svg></div>
    <div class="ti"><svg><use href="#sheets"/></svg></div>
    <div class="ti"><svg><use href="#toolp"/></svg></div>
    <div class="ti"><svg><use href="#markup"/></svg></div>
    <div class="ti"><svg><use href="#calc"/></svg></div>
    <div class="ts ts-n"></div>
    <div class="ti"><svg><use href="#helpc"/></svg></div>
    <div class="tg"></div>
    <div class="ti"><svg><use href="#layers"/></svg></div>
    <div class="ti"><svg><use href="#layerp"/></svg></div>
    <div class="dd dd-lay w300"><svg><use href="#bulb"/></svg><svg><use href="#sun"/></svg><svg class="lay-c"><use href="#vpf"/></svg><svg class="lay-d"><use href="#lockop"/></svg><div class="swatch lay-sw"></div>0<span class="chev"></span></div>
    <div class="ti"><svg><use href="#laymk"/></svg></div>
    <div class="ti"><svg><use href="#layoff"/></svg></div>
    <div class="ti"><svg><use href="#layiso"/></svg></div>
    <div class="ti"><svg><use href="#laylk"/></svg></div>
    <div class="ti"><svg><use href="#layul"/></svg></div>
    <div class="dd dd-mid w118">!PboMS-10<span class="chev"></span></div>
    <div class="ti"><svg><use href="#polar1"/></svg></div>
    <div class="ti"><svg><use href="#polar2"/></svg></div>
    <div class="ti"><svg><use href="#polar3"/></svg></div>
    <div class="ti"><svg><use href="#polar4"/></svg></div>
    <div class="dd w158"><div class="lnA"></div>ByLayer<span class="chev"></span></div>
    <div class="ti"><svg><use href="#hand"/></svg></div>
    <div class="ti"><svg><use href="#mag"/></svg></div>
    <div class="ti"><svg><use href="#zoomwin"/></svg></div>
    <div class="ti"><svg><use href="#zoomprev"/></svg></div>
    <div class="dd dd-col w150"><div class="swatch"></div>ByLayer<span class="chev"></span></div>
    <div class="ti"><svg><use href="#corner"/></svg></div>
    <div class="ti"><svg><use href="#greenb"/></svg></div>
    <div class="ti"><svg><use href="#cyanh"/></svg></div>
  </div>

  <div class="barB d-flex align-items-center overflow-hidden">
    <div class="dd w61"><span class="chev"></span></div>
    <div class="ti"><svg><use href="#gear"/></svg></div>
    <div class="ti"><svg><use href="#wsmask"/></svg></div>
    <div class="tg"></div>
    <div class="ti"><svg><use href="#layers2"/></svg></div>
    <div class="dd dd-lay w300"><svg><use href="#bulb"/></svg><svg><use href="#sun"/></svg><svg class="lay-c"><use href="#vpf"/></svg><svg class="lay-d"><use href="#lockop"/></svg><div class="swatch lay-sw"></div>0<span class="chev"></span></div>
    <div class="ti"><svg><use href="#layers"/></svg></div>
    <div class="ti"><svg><use href="#layerp"/></svg></div>
    <div class="ti"><svg><use href="#layers2"/></svg></div>
    <div class="tg"></div>
    <div class="dd dd-col w150"><div class="swatch"></div>ByLayer<span class="chev"></span></div>
    <div class="ts"></div>
    <div class="dd w159"><div class="lnA"></div>ByLayer<span class="chev"></span></div>
    <div class="ts"></div>
    <div class="dd w125"><div class="lnB"></div>ByLayer<span class="chev"></span></div>
    <div class="ts"></div>
    <div class="dd dd-dim dd-color w119">ByColor<span class="chev"></span></div>
    <div class="tg"></div>
    <div class="ti"><svg><use href="#texta"/></svg></div>
    <div class="dd dd-mid w120">!赫思Small<span class="chev"></span></div>
    <div class="ts"></div>
    <div class="ti"><svg><use href="#dimst"/></svg></div>
    <div class="dd dd-mid w120">!PboMS-10<span class="chev"></span></div>
    <div class="ts"></div>
    <div class="ti"><svg><use href="#tablest"/></svg></div>
    <div class="dd w119">Standard<span class="chev"></span></div>
    <div class="ts"></div>
    <div class="ti"><svg><use href="#mulst"/></svg></div>
    <div class="dd dd-mid dd-end w91">!赫思深化v13</div>
  </div>

  <div class="tabrow d-flex align-items-end">
    <div class="tabon d-flex align-items-center"><svg><use href="#dwgfile"/></svg>Drawing8*</div>
    <div class="tabadd align-self-center">+</div>
  </div>

  <div class="cadview flex-grow-1 position-relative">
    <svg viewBox="0 134 1664 811">
      <use href="#sheet"/>
      <use href="#sheet" x="578.600"/>
    </svg>
    <div class="ucs position-absolute d-flex align-items-center">
      <span class="ucs0">0</span>
      <svg class="ucs-a"><use href="#chkmk"/></svg>
      <svg class="ucs-b"><use href="#pickst"/></svg>
    </div>
    <div class="psetag position-absolute">PSE</div>
    <div class="pickdot position-absolute"><div class="pickbox position-absolute"></div></div>
    <div class="prompt position-absolute">选择对象:</div>
    <div class="floatbar position-absolute d-flex align-items-center rounded-pill">
      <svg class="fb-gear" viewBox="0 0 20 20" width="22" height="22"><circle cx="10" cy="10" r="6" fill="#2c7fdb" stroke="#2c7fdb" stroke-width="2"/><path stroke="#2c7fdb" stroke-width="3.500" d="M10 1v4M10 15v4M1 10h4M15 10h4M3.600 3.600l3 3M13.400 13.400l3 3M3.600 16.400l3-3M13.400 6.600l3-3"/><circle cx="10" cy="10" r="2" fill="#5d9ee6"/></svg>
      <svg class="fb-lock" viewBox="0 0 20 20" width="20" height="20"><path fill="none" stroke="#aab8c4" stroke-width="1.500" d="M3 9h14v10H3zM6 9V6c0-5 8-5 8 0v3"/><circle cx="10" cy="14" r="1.500" fill="none" stroke="#aab8c4"/></svg>
      <div class="fb-gs">GS</div>
      <div class="fb-t fb-first">FF</div><div class="fb-t">RC</div><div class="fb-t">FC</div><div class="fb-t">AR</div><div class="fb-t fb-em">EM</div><div class="fb-t">EL</div>
      <svg class="fb-up" viewBox="0 0 20 20" width="20" height="20"><path fill="none" stroke="#4a82b0" stroke-width="2.600" d="M2 10l8-6 8 6M2 17l8-6 8 6"/></svg>
    </div>
  </div>

  <div class="cmdedge"></div>
  <div class="cmdlog">ematcher</div>
  <div class="cmdline"><b>EMATCHER</b> 选择对象:</div>

  <div class="statusrow d-flex align-items-center">
    <div class="sb-left d-flex align-items-center">
      <div class="sb-tab"><span>布局2</span></div>
      <div class="sb-add">+</div>
    </div>
    <div class="sb-model">模型</div>
    <div class="sb-i sb-grid"><svg><use href="#gridst"/></svg></div>
    <div class="sb-i"><svg><use href="#snapst"/></svg></div>
    <div class="sb-c">▼</div>
    <div class="sb-i sb-on sb-first-on"><svg><use href="#inferst"/></svg></div>
    <div class="sb-i sb-on sb-next-on"><svg><use href="#orthost"/></svg></div>
    <div class="sb-i"><svg><use href="#polarst"/></svg></div>
    <div class="sb-c">▼</div>
    <div class="sb-i sb-m1"><svg><use href="#osnapst"/></svg></div>
    <div class="sb-c">▼</div>
    <div class="sb-i sb-m1"><svg><use href="#anglest"/></svg></div>
    <div class="sb-i sb-on sb-m2"><svg><use href="#boxst"/></svg></div>
    <div class="sb-c">▼</div>
    <div class="sb-i sb-m4"><svg><use href="#annoman"/></svg></div>
    <div class="sb-sc">!HesiSC_1:10</div>
    <div class="sb-c">▼</div>
    <div class="sb-i sb-m4"><svg viewBox="0 0 20 20"><path stroke="#e0e2e6" stroke-width="1.800" d="M10 1v18M1 10h18"/></svg></div>
    <div class="sb-i sb-m1"><svg><use href="#shapes"/></svg></div>
    <div class="sb-l sb-l-first">文字</div><div class="sb-l">填充</div><div class="sb-l">家私</div><div class="sb-l">图例图符</div><div class="sb-l">材料</div><div class="sb-l">尺寸</div><div class="sb-l">工具面板</div><div class="sb-l">功能</div>
  </div>
  <div class="botline"></div>
</div>

<script src="https://cdn.jsdelivr.net/npm/bootstrap@5.3.0/dist/js/bootstrap.bundle.min.js"></script>
</body>
</html>
